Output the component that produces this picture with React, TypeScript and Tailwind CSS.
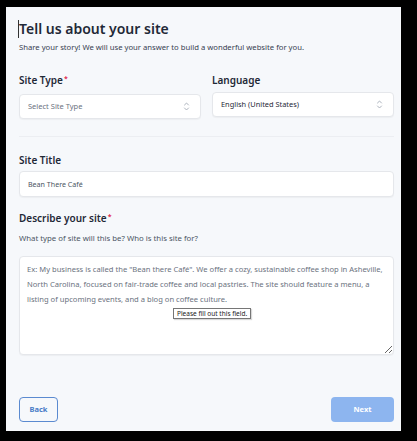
import React from "react";

function UpDown() {
  return (
    <svg width="7" height="9" viewBox="0 0 7 9" fill="none" stroke="#a3aab5" strokeWidth="0.9" strokeLinecap="round" strokeLinejoin="round">
      <path d="M1.5 3 L3.5 1 L5.5 3" />
      <path d="M1.5 6 L3.5 8 L5.5 6" />
    </svg>
  );
}

function Req() {
  return <span className="text-[#e11d48] text-[7px] relative -top-[3px] ml-[1px]">*</span>;
}

export default function App() {
  return (
    <div
      className="w-[417px] h-[441px] bg-black pt-[7px] pl-[6px]"
      style={{ fontFamily: '"Noto Sans", "Liberation Sans", sans-serif' }}
    >
      <div className="w-[395px] h-[424px] bg-[#f6f8fb] pl-[13px] pr-[7px] pt-[12px] flex flex-col text-[#1f2937]">
        <div className="relative">
          <span className="absolute -left-[1px] top-[1px] w-px h-[18px] bg-[#333]" />
          <h1 className="text-[14px] leading-[20px] font-semibold text-[#1f2937]">Tell us about your site</h1>
        </div>
        <p className="mt-[2px] text-[7.7px] leading-[12px] text-[#374151]">
          Share your story! We will use your answer to build a wonderful website for you.
        </p>

        <div className="mt-[20px] grid grid-cols-2 gap-x-[11px]">
          <div className="flex flex-col">
            <label className="text-[10px] leading-[14px] font-semibold">
              Site Type
              <Req />
            </label>
            <div className="mt-[5px] h-[25px] bg-white border border-[#e5e7eb] rounded-[4px] shadow-[0_1px_1px_rgba(0,0,0,0.04)] flex items-center justify-between pl-[8px] pr-[10px]">
              <span className="text-[7.5px] text-[#6b7280]">Select Site Type</span>
              <UpDown />
            </div>
          </div>
          <div className="flex flex-col">
            <label className="text-[10px] leading-[14px] font-semibold">Language</label>
            <div className="mt-[5px] h-[25px] bg-white border border-[#e5e7eb] rounded-[4px] shadow-[0_1px_1px_rgba(0,0,0,0.04)] flex items-center justify-between pl-[8px] pr-[10px]">
              <span className="text-[7.4px] text-[#1f2937]">English (United States)</span>
              <UpDown />
            </div>
          </div>
        </div>

        <div className="mt-[17px] h-px bg-[#eceef2]" />

        <label className="mt-[16px] text-[10px] leading-[14px] font-semibold">Site Title</label>
        <div className="mt-[4px] h-[26px] bg-white border border-[#e5e7eb] rounded-[4px] shadow-[0_1px_1px_rgba(0,0,0,0.04)] flex items-center pl-[8px]">
          <span className="text-[7.1px] text-[#4b5563]">Bean There Café</span>
        </div>

        <label className="mt-[14px] text-[10px] leading-[14px] font-semibold">
          Describe your site
          <Req />
        </label>
        <p className="mt-[5px] text-[7.8px] leading-[12px] text-[#4b5563]">
          What type of site will this be? Who is this site for?
        </p>

        <div className="relative mt-[12px]">
          <textarea
            className="block w-full h-[99px] bg-white border border-[#e5e7eb] rounded-[4px] shadow-[0_1px_1px_rgba(0,0,0,0.04)] pl-[7px] pr-[1px] pt-[5px] text-[7.6px] leading-[15px] text-[#374151] placeholder:text-[#6b7280] outline-none"
            style={{ fontFamily: '"Noto Sans", "Liberation Sans", sans-serif' }}
            placeholder={'Ex: My business is called the "Bean there Café". We offer a cozy, sustainable coffee shop in Asheville,\nNorth Carolina, focused on fair-trade coffee and local pastries. The site should feature a menu, a\nlisting of upcoming events, and a blog on coffee culture.'}
          />
          <div className="absolute left-[154px] top-[52px] bg-white border border-[#767676] shadow-[1px_1px_1px_rgba(0,0,0,0.15)] px-[3px] h-[11px] flex items-center">
            <span className="text-[6.5px] text-[#222]">Please fill out this field.</span>
          </div>
        </div>

        <div className="mt-auto mb-[9px] flex justify-between items-center">
          <button className="w-[39px] h-[25px] border border-[#5b8ad0] rounded-[4px] text-[7.5px] font-bold text-[#4a7cc7] bg-transparent">
            Back
          </button>
          <button className="w-[63px] h-[25px] rounded-[4px] bg-[#8db5ef] text-[7.5px] font-bold text-white">
            Next
          </button>
        </div>
      </div>
    </div>
  );
}
